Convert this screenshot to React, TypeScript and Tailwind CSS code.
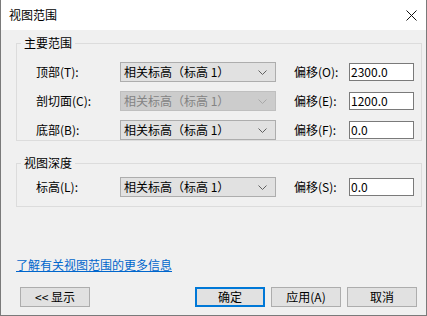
import React from 'react'

const font = { fontFamily: '"Noto Sans CJK SC", "Microsoft YaHei", sans-serif' }

function Chevron({ disabled }: { disabled?: boolean }) {
  return (
    <svg width="9" height="5" viewBox="0 0 9 5" className="mr-[8px] shrink-0">
      <path d="M0.5 0.5 L4.5 4.5 L8.5 0.5" fill="none" stroke={disabled ? '#a8a8a8' : '#606060'} strokeWidth="1" />
    </svg>
  )
}

function Select({ disabled }: { disabled?: boolean }) {
  return (
    <div
      className={
        'w-[156px] h-[20px] flex items-center justify-between border pl-[3px] ' +
        (disabled ? 'bg-[#cccccc] border-[#bfbfbf] text-[#838383]' : 'bg-[#e1e1e1] border-[#adadad] text-black')
      }
    >
      <span className="leading-none">相关标高（标高 1）</span>
      <Chevron disabled={disabled} />
    </div>
  )
}

function Row({ label, offset, value, disabled }: { label: string; offset: string; value: string; disabled?: boolean }) {
  return (
    <div className="flex items-center h-[20px]">
      <div className="w-[103px] pl-[19px] shrink-0">{label}</div>
      <Select disabled={disabled} />
      <div className="ml-[18px] w-[55px] shrink-0">{offset}</div>
      <div className="w-[65px] h-[18px] bg-white border border-[#7a7a7a] flex items-center pl-[1px] leading-none">{value}</div>
    </div>
  )
}

function Group({ title, className, children }: { title: string; className?: string; children: React.ReactNode }) {
  return (
    <div className={'relative w-[406px] border border-[#dcdcdc] ' + (className ?? '')}>
      <span className="absolute left-[4px] -top-[10px] px-[3px] bg-[#f0f0f0] leading-[18px]">{title}</span>
      {children}
    </div>
  )
}

function Button({ children, primary }: { children: React.ReactNode; primary?: boolean }) {
  return (
    <button
      className={
        'w-[70px] h-[20px] flex items-center justify-center bg-[#e1e1e1] leading-none ' +
        (primary ? 'border-2 border-[#0078d7]' : 'border border-[#adadad]')
      }
    >
      {children}
    </button>
  )
}

export default function App() {
  return (
    <div
      style={font}
      className="w-[427px] h-[316px] flex flex-col border-x border-b border-[#7a7a7a] text-[12px] text-black select-none"
    >
      <div className="h-[30px] shrink-0 bg-white flex items-center justify-between pl-[8px] pr-[9px]">
        <span>视图范围</span>
        <svg width="11" height="11" viewBox="0 0 11 11">
          <path d="M0.5 0.5 L10.5 10.5 M10.5 0.5 L0.5 10.5" stroke="#111" strokeWidth="1" />
        </svg>
      </div>

      <div className="flex-1 bg-[#f0f0f0] pl-[15px] pr-[4px] flex flex-col">
        <Group title="主要范围" className="mt-[13px] pt-[18px]">
          <div className="flex flex-col gap-[9px]">
            <Row label="顶部(T):" offset="偏移(O):" value="2300.0" />
            <Row label="剖切面(C):" offset="偏移(E):" value="1200.0" disabled />
            <Row label="底部(B):" offset="偏移(F):" value="0.0" />
          </div>
        </Group>

        <Group title="视图深度" className="mt-[22px] pt-[13px] pb-[9px]">
          <Row label="标高(L):" offset="偏移(S):" value="0.0" />
        </Group>

        <a href="#" className="mt-[50px] h-[16px] leading-[16px] text-[#0066cc] underline self-start">
          了解有关视图范围的更多信息
        </a>

        <div className="mt-[14px] flex items-center justify-between pl-[4px] pr-[5px]">
          <Button>&lt;&lt; 显示</Button>
          <div className="flex gap-[6px]">
            <Button primary>确定</Button>
            <Button>应用(A)</Button>
            <Button>取消</Button>
          </div>
        </div>
      </div>
    </div>
  )
}
